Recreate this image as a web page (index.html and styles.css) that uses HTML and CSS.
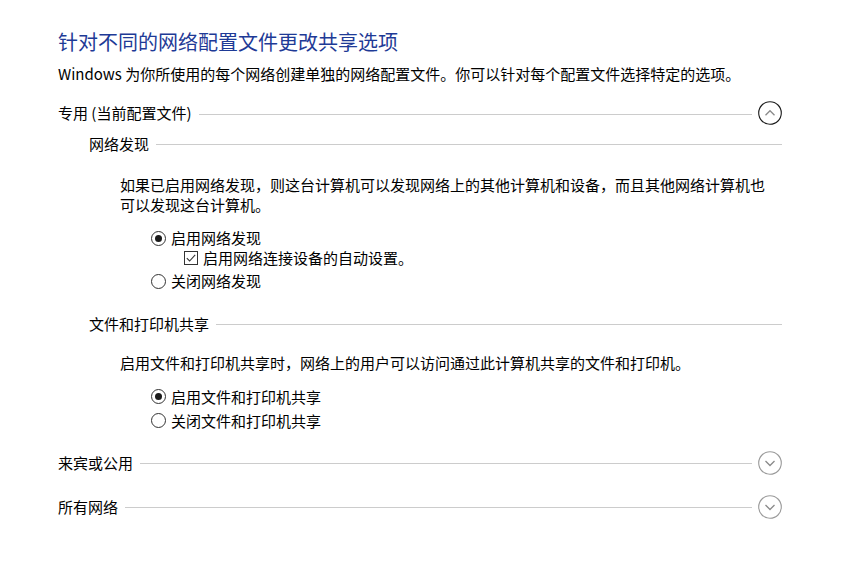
FILE: index.html
```html
<!DOCTYPE html>
<html lang="zh-CN">
<head>
<meta charset="utf-8">
<title>高级共享设置</title>
<link rel="stylesheet" href="styles.css">
</head>
<body>
<main class="page">
  <h1 class="title">针对不同的网络配置文件更改共享选项</h1>
  <p class="intro">Windows 为你所使用的每个网络创建单独的网络配置文件。你可以针对每个配置文件选择特定的选项。</p>

  <div class="group-head first">
    <span class="group-label">专用 (当前配置文件)</span>
    <span class="rule"></span>
    <span class="toggle open">
      <svg viewBox="0 0 24 24" width="24" height="24"><circle cx="12" cy="12" r="11.3" fill="none" stroke="#1a1a1a" stroke-width="1.1"/><path d="M7.5 14.2 L12 9.7 L16.5 14.2" fill="none" stroke="#8a8a8a" stroke-width="1.3"/></svg>
    </span>
  </div>

  <div class="sub-head sub-first">
    <span class="sub-label">网络发现</span>
    <span class="rule"></span>
  </div>
  <p class="para para-1">如果已启用网络发现，则这台计算机可以发现网络上的其他计算机和设备，而且其他网络计算机也可以发现这台计算机。</p>
  <div class="option opt-a"><span class="radio checked"></span><span>启用网络发现</span></div>
  <div class="check-option"><span class="checkbox"><svg viewBox="0 0 14 14" width="14" height="14"><path d="M2.8 7.2 L5.6 10 L11.2 3.9" fill="none" stroke="#333" stroke-width="1.1"/></svg></span><span>启用网络连接设备的自动设置。</span></div>
  <div class="option opt-b"><span class="radio"></span><span>关闭网络发现</span></div>

  <div class="sub-head sub-second">
    <span class="sub-label">文件和打印机共享</span>
    <span class="rule"></span>
  </div>
  <p class="para para-2">启用文件和打印机共享时，网络上的用户可以访问通过此计算机共享的文件和打印机。</p>
  <div class="option opt-a"><span class="radio checked"></span><span>启用文件和打印机共享</span></div>
  <div class="option opt-c"><span class="radio"></span><span>关闭文件和打印机共享</span></div>

  <div class="group-head later">
    <span class="group-label">来宾或公用</span>
    <span class="rule"></span>
    <span class="toggle">
      <svg viewBox="0 0 24 24" width="24" height="24"><circle cx="12" cy="12" r="11.3" fill="none" stroke="#9a9a9a" stroke-width="1.1"/><path d="M7.5 10 L12 14.5 L16.5 10" fill="none" stroke="#8a8a8a" stroke-width="1.3"/></svg>
    </span>
  </div>
  <div class="group-head later">
    <span class="group-label">所有网络</span>
    <span class="rule"></span>
    <span class="toggle">
      <svg viewBox="0 0 24 24" width="24" height="24"><circle cx="12" cy="12" r="11.3" fill="none" stroke="#9a9a9a" stroke-width="1.1"/><path d="M7.5 10 L12 14.5 L16.5 10" fill="none" stroke="#8a8a8a" stroke-width="1.3"/></svg>
    </span>
  </div>
</main>
</body>
</html>
```

FILE: styles.css
```css
html, body {
  margin: 0;
  padding: 0;
  background: #ffffff;
}

body {
  font-family: "Noto Sans CJK SC", "Noto Sans", "Liberation Sans", sans-serif;
  font-size: 15px;
  color: #000;
}

.page {
  width: 724px;
  padding: 28px 0 0 58px;
}

.title {
  margin: 0;
  font-size: 20px;
  line-height: 28px;
  font-weight: 400;
  color: #1e3a96;
}

.intro {
  margin: 8px 0 0;
  line-height: 20px;
}

.group-head {
  display: flex;
  align-items: center;
  height: 24px;
}

.group-head.first { margin-top: 17px; }
.group-head.later { margin-top: 20px; }

.group-label {
  line-height: 20px;
  white-space: nowrap;
}

.rule {
  flex: 1;
  height: 1px;
  background: #cccccc;
  margin-left: 7px;
}

.group-head .rule {
  margin-right: 6px;
  margin-top: 2px;
}

.toggle {
  display: flex;
  width: 24px;
  height: 24px;
}

.sub-head {
  display: flex;
  align-items: center;
  height: 20px;
  padding-left: 31px;
}

.sub-first { margin-top: 9px; }
.sub-second { margin-top: 23px; }

.sub-label {
  white-space: nowrap;
  line-height: 20px;
}

.para {
  margin: 0;
  padding-left: 62px;
  width: 650px;
  line-height: 19.5px;
}

.para-1 { margin-top: 21px; }
.para-2 { margin-top: 19px; }

.option {
  display: flex;
  align-items: center;
  gap: 5px;
  height: 20px;
  padding-left: 93px;
  line-height: 20px;
}

.opt-a { margin-top: 14px; }
.opt-b { margin-top: 3px; }
.opt-c { margin-top: 4px; }

.radio {
  box-sizing: border-box;
  width: 15px;
  height: 15px;
  border: 1px solid #333;
  border-radius: 50%;
  position: relative;
  flex: none;
}

.radio.checked::after {
  content: "";
  position: absolute;
  left: 3px;
  top: 3px;
  width: 7px;
  height: 7px;
  border-radius: 50%;
  background: #1a1a1a;
}

.check-option {
  display: flex;
  align-items: center;
  gap: 5px;
  height: 20px;
  padding-left: 126px;
  line-height: 20px;
}

.checkbox {
  width: 14px;
  height: 14px;
  box-sizing: border-box;
  border: 1px solid #333;
  display: flex;
  flex: none;
}

.checkbox svg {
  margin: -1px;
}
```
